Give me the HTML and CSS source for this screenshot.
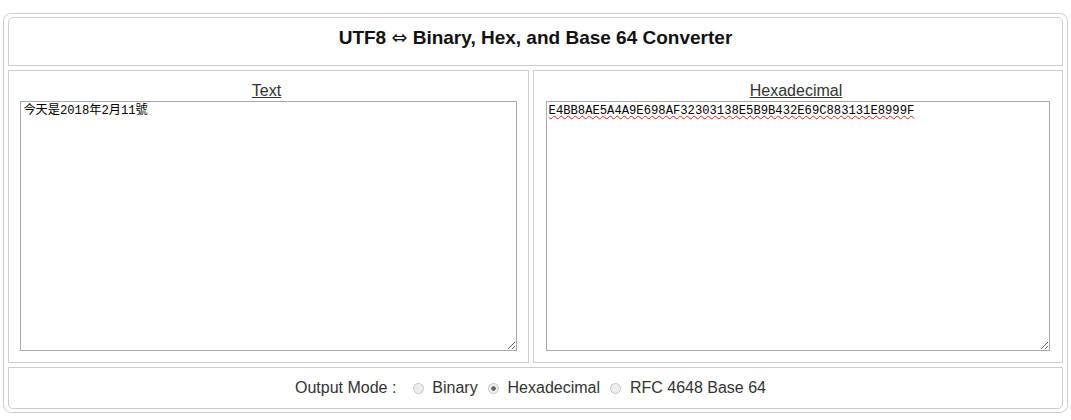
FILE: index.html
```html
<!DOCTYPE html>
<html lang="en">
<head>
  <meta charset="UTF-8">
  <title>UTF8 Converter</title>
  <link rel="stylesheet" href="styles.css">
</head>
<body>
  <div class="converter">
    <div class="cell title">UTF8 <span class="arrow">&hArr;</span> Binary, Hex, and Base 64 Converter</div>
    <div class="panes">
      <div class="cell pane">
        <label for="src">Text</label>
        <textarea id="src" spellcheck="false">今天是2018年2月11號</textarea>
      </div>
      <div class="cell pane">
        <label for="out">Hexadecimal</label>
        <textarea id="out" class="typo">E4BB8AE5A4A9E698AF32303138E5B9B432E69C883131E8999F</textarea>
      </div>
    </div>
    <div class="cell modes">
      <span class="caption">Output Mode :</span>
      <label><input type="radio" name="mode"> Binary</label>
      <label><input type="radio" name="mode" checked> Hexadecimal</label>
      <label><input type="radio" name="mode"> RFC 4648 Base 64</label>
    </div>
  </div>
</body>
</html>
```

FILE: styles.css
```css
body {
  margin: 13px 3px 0;
  font-family: "Liberation Sans", Arial, sans-serif;
  background: #fff;
  color: #333;
}
.converter {
  border: 1px solid #ccc;
  border-radius: 8px;
  padding: 3px 4px 3px 4px;
  display: flex;
  flex-direction: column;
  gap: 4px;
}
.cell {
  border: 1px solid #ccc;
}
.title {
  height: 47px;
  line-height: 38px;
  text-align: center;
  font-weight: bold;
  font-size: 19px;
  color: #111;
  border-radius: 5px 5px 0 0;
}
.arrow {
  font-family: "DejaVu Sans", sans-serif;
  font-weight: normal;
  font-size: 19px;
}
.panes {
  display: grid;
  grid-template-columns: 521px 1fr;
  gap: 4px;
}
.pane {
  display: flex;
  flex-direction: column;
  align-items: center;
  padding-top: 10px;
  box-sizing: border-box;
  height: 293px;
}
.pane label {
  font-size: 16px;
  text-decoration: underline;
  line-height: 20px;
  margin-left: -4px;
}
.pane textarea {
  width: 95.6%;
  height: 250px;
  box-sizing: border-box;
  border: 1px solid #a9a9a9;
  font-family: "Liberation Mono", "Noto Sans CJK TC", monospace;
  font-size: 12.2px;
  line-height: 15px;
  padding: 2px;
  color: #000;
  resize: both;
}
.typo {
  text-decoration: underline wavy #e02020;
  text-decoration-thickness: 1px;
}
.modes {
  height: 40px;
  line-height: 40px;
  text-align: center;
  font-size: 16px;
  border-radius: 0 0 5px 5px;
  padding-right: 10px;
}
.caption {
  margin-right: 6px;
}
.modes input {
  appearance: none;
  margin: 0 4px 0 6px;
  width: 11px;
  height: 11px;
  vertical-align: -1px;
  border: 1px solid #c4c4c4;
  border-radius: 50%;
  background: #eee;
  box-sizing: border-box;
}
.modes input:checked {
  background: radial-gradient(circle, #666 0 2px, #eee 2.5px);
}
```
